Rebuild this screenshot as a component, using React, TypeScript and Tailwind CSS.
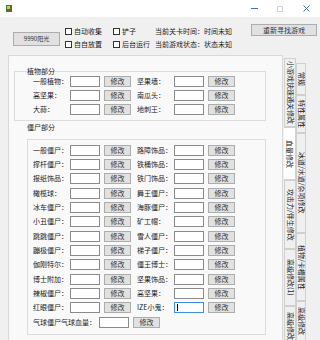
import React from "react";

const plantRows: [string, string][] = [
  ["一般植物：", "坚果墙："],
  ["高坚果：", "南瓜头："],
  ["大蒜：", "地刺王："],
];

const zombieRows: [string, string][] = [
  ["一般僵尸：", "路障饰品："],
  ["撑杆僵尸：", "铁桶饰品："],
  ["报纸饰品：", "铁门饰品："],
  ["橄榄球：", "舞王僵尸："],
  ["冰车僵尸：", "海豚僵尸："],
  ["小丑僵尸：", "矿工帽："],
  ["跳跳僵尸：", "雪人僵尸："],
  ["蹦极僵尸：", "梯子僵尸："],
  ["伽刚特尔：", "僵王博士："],
  ["博士附加：", "坚果饰品："],
  ["辣椒僵尸：", "高坚果："],
  ["红眼僵尸：", "IZE小鬼："],
];

// tabs sit in two columns on the right, text runs top to bottom
const innerTabs = [
  { name: "小游戏快速通关修改", h: "h-[69px]" },
  { name: "血量修改", h: "h-[53px]", active: true },
  { name: "攻击力/伴生修改", h: "h-[69px]" },
  { name: "高级修改(1)", h: "h-[57px]" },
  { name: "高级修改", h: "h-[40px]" },
];

const outerTabs = [
  { name: "常规", h: "h-[32px]" },
  { name: "特性属性", h: "h-[38px]" },
  { name: "冰道/水道/杂项修改", h: "h-[100px]" },
  { name: "植物/卡槽属性", h: "h-[68px]" },
  { name: "高级修改", h: "h-[40px]" },
];

function Btn({ text, w }: { text: string; w: string }) {
  return (
    <div
      className={`${w} h-[11px] flex items-center justify-center bg-[#e1e1e1] border border-[#adadad] text-[7px] leading-none text-[#333]`}
    >
      {text}
    </div>
  );
}

function Field({ label, focused }: { label: string; focused?: boolean }) {
  return (
    <div className="flex items-center w-[104px]">
      <span className="w-[37px] whitespace-nowrap text-[7px] leading-none">{label}</span>
      <div
        className={`w-[30px] h-[11px] bg-white border ${
          focused ? "border-[#3d8ee0]" : "border-[#8a8a8a]"
        } flex items-center pl-[2px]`}
      >
        {focused && <div className="w-px h-[7px] bg-black" />}
      </div>
      <div className="ml-[4px]">
        <Btn text="修改" w="w-[27px]" />
      </div>
    </div>
  );
}

function Check({ label }: { label: string }) {
  return (
    <div className="flex items-center h-[13px] gap-[2px]">
      <div className="w-[7px] h-[7px] bg-white border border-[#333]" />
      <span className="text-[7px] leading-none whitespace-nowrap">{label}</span>
    </div>
  );
}

function Tab({ name, h, active }: { name: string; h: string; active?: boolean }) {
  return (
    <div
      className={`${h} shrink-0 overflow-hidden flex items-center justify-center border border-[#d0d0d0] ${
        active ? "bg-white border-l-0" : "bg-[#f0f0f0]"
      }`}
    >
      <span className="[writing-mode:vertical-rl] [text-orientation:sideways] text-[7px] leading-none whitespace-nowrap text-[#222]">
        {name}
      </span>
    </div>
  );
}

export default function App() {
  return (
    <div className="w-[320px] h-[340px] bg-[#f0f0f0] flex flex-col overflow-hidden font-['Noto_Sans_CJK_SC',sans-serif] text-[#1c1c1c]">
      {/* title bar */}
      <div className="h-[17px] bg-white flex items-center shrink-0">
        <svg className="ml-[5px]" width="8" height="9" viewBox="0 0 8 9">
          <rect x="1" y="1" width="6" height="7" fill="#3a7d3a" />
          <rect x="2" y="2" width="3" height="3" fill="#e8c23a" />
          <rect x="4" y="5" width="3" height="3" fill="#b33a3a" />
        </svg>
        <div className="ml-auto flex h-full">
          <div className="w-[26px] flex items-center justify-center">
            <div className="w-[7px] h-px bg-[#4a6fa5]" />
          </div>
          <div className="w-[26px] flex items-center justify-center">
            <div className="w-[6px] h-[6px] border border-[#c9d3e0]" />
          </div>
          <div className="w-[27px] flex items-center justify-center">
            <svg width="7" height="7" viewBox="0 0 7 7">
              <path d="M0.5 0.5L6.5 6.5M6.5 0.5L0.5 6.5" stroke="#3f6fb5" strokeWidth="1" />
            </svg>
          </div>
        </div>
      </div>

      {/* top controls */}
      <div className="h-[38px] flex items-start shrink-0">
        <div className="ml-[13px] mt-[15px]">
          <div className="w-[47px] h-[14px] flex items-center justify-center bg-[#e1e1e1] border border-[#adadad] text-[6px] leading-none text-[#333]">
            9990阳光
          </div>
        </div>
        <div className="ml-[5px] mt-[8px] w-[48px] flex flex-col">
          <Check label="自动收集" />
          <Check label="自自放置" />
        </div>
        <div className="mt-[8px] w-[42px] flex flex-col">
          <Check label="铲子" />
          <Check label="后台运行" />
        </div>
        <div className="mt-[8px] w-[96px] flex flex-col text-[7px] leading-none">
          <div className="h-[13px] flex items-center whitespace-nowrap">当前关卡时间：时间未知</div>
          <div className="h-[13px] flex items-center whitespace-nowrap">当前游戏状态：状态未知</div>
        </div>
        <div className="mt-[7px]">
          <div className="w-[66px] h-[12px] flex items-center justify-center bg-[#e1e1e1] border border-[#adadad] text-[7px] leading-none text-[#333]">
            重新寻找游戏
          </div>
        </div>
      </div>

      {/* tab control */}
      <div className="flex flex-1 min-h-0">
        <div className="ml-[8px] w-[275px] bg-[#f9f9f9] border border-[#d9d9d9] border-b-0 flex flex-col">
          {/* plants */}
          <div className="ml-[5px] mt-[15px] w-[252px] h-[50px] border border-[#dcdcdc] relative shrink-0">
            <span className="absolute left-[12px] -top-[4px] bg-[#f9f9f9] text-[7px] leading-none">植物部分</span>
            <div className="mt-[2px] ml-[18px] flex flex-col">
              {plantRows.map(([a, b]) => (
                <div key={a} className="h-[14px] flex items-center">
                  <Field label={a} />
                  <Field label={b} />
                </div>
              ))}
            </div>
          </div>

          {/* zombies */}
          <div className="ml-[18px] mt-[3px] text-[7px] leading-none">僵尸部分</div>
          <div className="ml-[18px] mt-[8px] w-[239px] h-[196px] border border-[#dcdcdc] flex flex-col shrink-0">
            <div className="mt-[3px] ml-[5px] flex flex-col">
              {zombieRows.map(([a, b]) => (
                <div key={a} className="h-[14.35px] flex items-center">
                  <Field label={a} />
                  <Field label={b} focused={b === "IZE小鬼："} />
                </div>
              ))}
              <div className="h-[15px] flex items-center">
                <span className="w-[66px] whitespace-nowrap text-[7px] leading-none">气球僵尸气球血量：</span>
                <div className="w-[30px] h-[11px] bg-white border border-[#8a8a8a]" />
                <div className="ml-[4px]">
                  <Btn text="修改" w="w-[27px]" />
                </div>
              </div>
            </div>
          </div>
        </div>

        {/* vertical tab strip */}
        <div className="flex ml-[1px] overflow-hidden">
          <div className="w-[12px] mt-[3px] flex flex-col">
            {innerTabs.map((t) => (
              <Tab key={t.name} {...t} />
            ))}
          </div>
          <div className="w-[10px] mt-[8px] flex flex-col">
            {outerTabs.map((t) => (
              <Tab key={t.name} {...t} />
            ))}
          </div>
        </div>
      </div>
    </div>
  );
}
